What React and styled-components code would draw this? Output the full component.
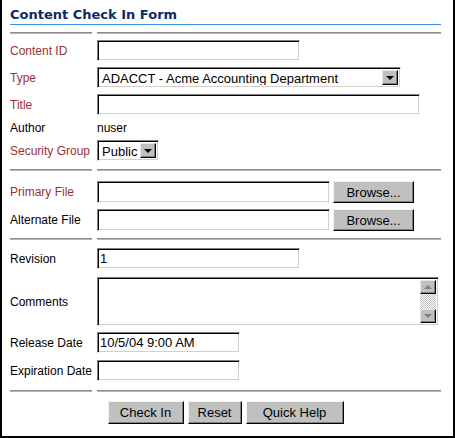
import React from 'react';
import styled, { createGlobalStyle } from 'styled-components';

const GlobalStyle = createGlobalStyle`
  html, body {
    margin: 0;
    padding: 0;
    background: #fff;
  }
  body {
    font-family: "Liberation Sans", Arial, sans-serif;
  }
`;

const red = '#993333';
const navy = '#0b2a68';

const Frame = styled.div`
  width: 455px;
  height: 438px;
  box-sizing: border-box;
  border: 2px solid #000;
  border-top: none;
  padding: 0 12px 0 8px;
  background: #fff;
`;

const Heading = styled.div`
  font-family: "DejaVu Sans", Verdana, sans-serif;
  font-weight: bold;
  font-size: 13px;
  line-height: 15px;
  color: ${navy};
  padding: 7px 0 2px;
  border-bottom: 1px solid #3d8ee6;
`;

const Separator = styled.div`
  display: grid;
  grid-template-columns: 82px 1fr;
  column-gap: 5px;
  margin-top: ${(p) => p.$top || 0}px;

  &::before,
  &::after {
    content: '';
    height: 2px;
    background: #8c8c8c;
    border-bottom: 1px solid #b4b4b4;
    box-sizing: border-box;
  }
`;

const Section = styled.div`
  display: flex;
  flex-direction: column;
  padding: ${(p) => p.$pt}px 0 ${(p) => p.$pb}px;
`;

const Row = styled.div`
  display: grid;
  grid-template-columns: 87px 1fr;
  align-items: center;
  height: ${(p) => p.$h}px;
  margin-top: ${(p) => p.$gap || 0}px;
`;

const Label = styled.div`
  font-size: 12px;
  line-height: 14px;
  color: ${(p) => (p.$required ? red : '#000')};
  white-space: nowrap;
`;

const Value = styled.div`
  font-size: 12px;
  line-height: 14px;
  color: #000;
`;

const insetBox = `
  box-sizing: border-box;
  border: 1px solid;
  border-color: #808080 #fff #fff #808080;
  box-shadow: inset 1px 1px 0 #000, inset -1px -1px 0 #d4d0c8;
  background: #fff;
`;

const TextInput = styled.input`
  ${insetBox}
  display: block;
  width: ${(p) => p.$w}px;
  height: ${(p) => p.$h || 21}px;
  margin: 0;
  padding: 0 2px 0 2px;
  font-family: "Liberation Sans", Arial, sans-serif;
  font-size: 13px;
  color: #000;
  outline: none;
`;

const SelectBox = styled.div`
  ${insetBox}
  display: flex;
  align-items: stretch;
  width: ${(p) => p.$w}px;
  height: 21px;
  padding: 2px;
`;

const SelectText = styled.div`
  flex: 1;
  font-size: 13px;
  line-height: 17px;
  padding-left: 2px;
  white-space: nowrap;
  overflow: hidden;
`;

const DropButton = styled.div`
  width: 16px;
  box-sizing: border-box;
  background: #c0c0c0;
  border: 1px solid;
  border-color: #e8e8e8 #000 #000 #e8e8e8;
  box-shadow: inset -1px -1px 0 #808080;
  display: flex;
  align-items: center;
  justify-content: center;

  &::after {
    content: '';
    border-left: 4px solid transparent;
    border-right: 4px solid transparent;
    border-top: 4px solid #000;
    margin-top: 1px;
  }
`;

const FileField = styled.div`
  display: flex;
  align-items: center;
  gap: 3px;
`;

const Button = styled.button`
  box-sizing: border-box;
  width: ${(p) => p.$w}px;
  height: ${(p) => p.$h || 23}px;
  margin: 0;
  padding: 0;
  background: #c0c0c0;
  border: 1px solid;
  border-color: #f4f4f4 #000 #000 #f4f4f4;
  box-shadow: inset -1px -1px 0 #808080;
  font-family: "Liberation Sans", Arial, sans-serif;
  font-size: 13px;
  color: #000;
`;

const TextArea = styled.div`
  ${insetBox}
  display: flex;
  justify-content: flex-end;
  width: 342px;
  height: 49px;
  padding: 2px;
`;

const ScrollBar = styled.div`
  width: 16px;
  display: flex;
  flex-direction: column;
`;

const ScrollButton = styled.div`
  height: 14px;
  box-sizing: border-box;
  background: #c0c0c0;
  border: 1px solid;
  border-color: #e8e8e8 #000 #000 #e8e8e8;
  box-shadow: inset -1px -1px 0 #808080;
  display: flex;
  align-items: center;
  justify-content: center;

  &::after {
    content: '';
    border-left: 4px solid transparent;
    border-right: 4px solid transparent;
    ${(p) =>
      p.$up
        ? 'border-bottom: 4px solid #808080;'
        : 'border-top: 4px solid #808080;'}
  }
`;

const ScrollTrack = styled.div`
  flex: 1;
  background-image: conic-gradient(#fff 25%, #c0c0c0 0 50%, #fff 0 75%, #c0c0c0 0);
  background-size: 2px 2px;
`;

const Footer = styled.div`
  display: flex;
  justify-content: center;
  gap: 4px;
  padding-top: 9px;
`;

const Select = ({ w, children }) => (
  <SelectBox $w={w}>
    <SelectText>{children}</SelectText>
    <DropButton />
  </SelectBox>
);

export default () => {
  return (
    <>
      <GlobalStyle />
      <Frame>
        <Heading>Content Check In Form</Heading>
        <Separator $top={7} />

        <Section $pt={6} $pb={8}>
          <Row $h={21}>
            <Label $required>Content ID</Label>
            <TextInput $w={203} readOnly />
          </Row>
          <Row $h={21} $gap={6}>
            <Label $required>Type</Label>
            <Select w={304}>ADACCT - Acme Accounting Department</Select>
          </Row>
          <Row $h={21} $gap={6}>
            <Label $required>Title</Label>
            <TextInput $w={323} readOnly />
          </Row>
          <Row $h={13} $gap={6}>
            <Label>Author</Label>
            <Value>nuser</Value>
          </Row>
          <Row $h={21} $gap={6}>
            <Label $required>Security Group</Label>
            <Select w={62}>Public</Select>
          </Row>
        </Section>
        <Separator />

        <Section $pt={10} $pb={7}>
          <Row $h={22}>
            <Label $required>Primary File</Label>
            <FileField>
              <TextInput $w={233} $h={22} readOnly />
              <Button $w={81} $h={22}>Browse...</Button>
            </FileField>
          </Row>
          <Row $h={22} $gap={6}>
            <Label>Alternate File</Label>
            <FileField>
              <TextInput $w={233} $h={22} readOnly />
              <Button $w={81} $h={22}>Browse...</Button>
            </FileField>
          </Row>
        </Section>
        <Separator />

        <Section $pt={8} $pb={9}>
          <Row $h={21}>
            <Label>Revision</Label>
            <TextInput $w={203} defaultValue="1" readOnly />
          </Row>
          <Row $h={49} $gap={8}>
            <Label>Comments</Label>
            <TextArea>
              <ScrollBar>
                <ScrollButton $up />
                <ScrollTrack />
                <ScrollButton />
              </ScrollBar>
            </TextArea>
          </Row>
          <Row $h={21} $gap={6}>
            <Label>Release Date</Label>
            <TextInput $w={143} defaultValue="10/5/04 9:00 AM" readOnly />
          </Row>
          <Row $h={21} $gap={7}>
            <Label>Expiration Date</Label>
            <TextInput $w={143} readOnly />
          </Row>
        </Section>
        <Separator />

        <Footer>
          <Button $w={76}>Check In</Button>
          <Button $w={54}>Reset</Button>
          <Button $w={98}>Quick Help</Button>
        </Footer>
      </Frame>
    </>
  );
};
